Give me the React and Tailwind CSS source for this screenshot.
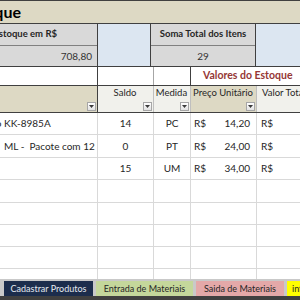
import React from 'react';

// Planilha de controle de estoque (recorte)
const products = [
  { prefix: 'Rolamento ', name: 'KK-8985A', saldo: '14', medida: 'PC', preco: '14,20' },
  { prefix: '', name: 'ML -  Pacote com 12', saldo: '0', medida: 'PT', preco: '24,00' },
  { prefix: '', name: '', saldo: '15', medida: 'UM', preco: '34,00' },
];

const rowHeights = [22, 23, 22, 23, 22, 22, 22, 22];

const DropButton = () => (
  <span className="flex h-[9px] w-[9px] items-center justify-center border border-[#a6a6a6] bg-gradient-to-b from-white to-[#e2e2e2]">
    <svg width="5" height="3" viewBox="0 0 5 3">
      <path d="M0 0h5L2.5 3z" fill="#3a3a3a" />
    </svg>
  </span>
);

const HeaderCell = ({ width, bg, label, border }) => (
  <div className={`flex ${width} shrink-0 flex-col justify-between border-r ${border} ${bg} pb-[1px] pr-[1px]`}>
    <span className="whitespace-nowrap pt-[2px] text-center text-[9.5px] leading-none text-[#262626]">{label}</span>
    <span className="self-end">
      <DropButton />
    </span>
  </div>
);

export default function App() {
  return (
    <div className="flex h-[300px] w-[300px] flex-col overflow-hidden bg-white text-[10px] text-[#262626]" style={{ fontFamily: 'Lato, "Open Sans", sans-serif' }}>
      {/* título */}
      <div className="flex h-[24px] shrink-0 items-center border-y border-[#404040] bg-[#ddd9c4]">
        <div className="flex w-[21px] shrink-0 justify-end">
          <span className="whitespace-nowrap text-[16px] font-bold leading-none text-black">Controle de Estoque</span>
        </div>
      </div>

      {/* totais */}
      <div className="flex h-[43px] shrink-0 border-b border-[#404040]">
        <div className="flex w-[98px] shrink-0 flex-col border-r border-[#404040] bg-[#d9d9d9]">
          <div className="flex h-[22px] items-center border-b border-[#808080]">
            <div className="flex w-[57px] shrink-0 justify-end">
              <span className="whitespace-nowrap text-[9.5px] font-bold">Valor Total do Estoque em R$</span>
            </div>
          </div>
          <div className="flex flex-1 items-center justify-end pr-[5px] text-[#333]">708,80</div>
        </div>
        <div className="w-[53px] shrink-0 border-r border-[#404040] bg-[#dce6f1]" />
        <div className="flex w-[105px] shrink-0 flex-col border-r border-[#404040] bg-[#d9d9d9]">
          <div className="flex h-[22px] items-center justify-center border-b border-[#808080] text-[9.5px] font-bold">Soma Total dos Itens</div>
          <div className="flex flex-1 items-center justify-center text-[#333]">29</div>
        </div>
        <div className="flex-1 bg-[#dce6f1]" />
      </div>

      {/* faixa valores */}
      <div className="flex h-[19px] shrink-0 border-b border-[#404040]">
        <div className="w-[98px] shrink-0 border-r border-[#404040]" />
        <div className="w-[56px] shrink-0 border-r border-[#a6a6a6]" />
        <div className="w-[37px] shrink-0 border-r border-[#404040]" />
        <div className="flex flex-1 items-center whitespace-nowrap pl-[12px] text-[10.5px] font-bold text-[#953735]">Valores do Estoque</div>
      </div>

      {/* cabeçalho da tabela */}
      <div className="flex h-[27px] shrink-0 border-b border-[#404040]">
        <HeaderCell width="w-[98px]" bg="bg-[#ddd9c4]" label="" border="border-[#404040]" />
        <HeaderCell width="w-[56px]" bg="bg-[#f1f1ec]" label="Saldo" border="border-[#bfbfbf]" />
        <HeaderCell width="w-[37px]" bg="bg-[#f1f1ec]" label="Medida" border="border-[#bfbfbf]" />
        <HeaderCell width="w-[66px]" bg="bg-[#ddd9c4]" label="Preço Unitário" border="border-[#bfbfbf]" />
        <div className="min-w-0 flex-1 whitespace-nowrap bg-[#f1f1ec] pl-[5px] pt-[2px] text-[9.5px] leading-none">Valor Total</div>
      </div>

      {/* linhas */}
      <div className="flex-1 overflow-hidden">
        {rowHeights.map((h, i) => {
          const p = products[i];
          return (
            <div key={i} className="flex shrink-0 border-b border-[#d9d9d9]" style={{ height: h }}>
              <div className="flex w-[98px] shrink-0 items-center overflow-hidden border-r border-[#d9d9d9]">
                {p && p.prefix && (
                  <div className="flex w-[4px] shrink-0 justify-end">
                    <span className="whitespace-pre">{p.prefix}</span>
                  </div>
                )}
                {p && <span className={`whitespace-pre ${p.prefix ? '' : 'pl-[4px]'}`}>{p.name}</span>}
              </div>
              <div className="flex w-[56px] shrink-0 items-center justify-center border-r border-[#d9d9d9]">{p && p.saldo}</div>
              <div className="flex w-[37px] shrink-0 items-center justify-center border-r border-[#d9d9d9]">{p && p.medida}</div>
              <div className="flex w-[66px] shrink-0 items-center justify-between border-r border-[#d9d9d9] pl-[3px] pr-[6px]">
                {p && (
                  <>
                    <span>R$</span>
                    <span>{p.preco}</span>
                  </>
                )}
              </div>
              <div className="flex min-w-0 flex-1 items-center pl-[4px]">{p && 'R$'}</div>
            </div>
          );
        })}
      </div>

      {/* abas */}
      <div className="flex h-[21px] shrink-0 flex-col bg-[#c9c9c9]">
        <div className="flex h-[17px] items-end gap-[3px] pl-[4px] text-[9px]">
          <div className="flex h-[15px] w-[89px] shrink-0 items-center justify-center whitespace-nowrap bg-[#1c2d4c] text-[#e4e9f0]">Cadastrar Produtos</div>
          <div className="flex h-[15px] w-[97px] shrink-0 items-center justify-center whitespace-nowrap bg-[#c4d79b]">Entrada de Materiais</div>
          <div className="flex h-[15px] w-[88px] shrink-0 items-center justify-center whitespace-nowrap bg-[#e4a8a8]">Saida de Materiais</div>
          <div className="flex h-[15px] w-[60px] shrink-0 items-center whitespace-nowrap bg-[#ffff00] pl-[5px]">informações</div>
        </div>
        <div className="flex-1 bg-[#404040]" />
      </div>
    </div>
  );
}
